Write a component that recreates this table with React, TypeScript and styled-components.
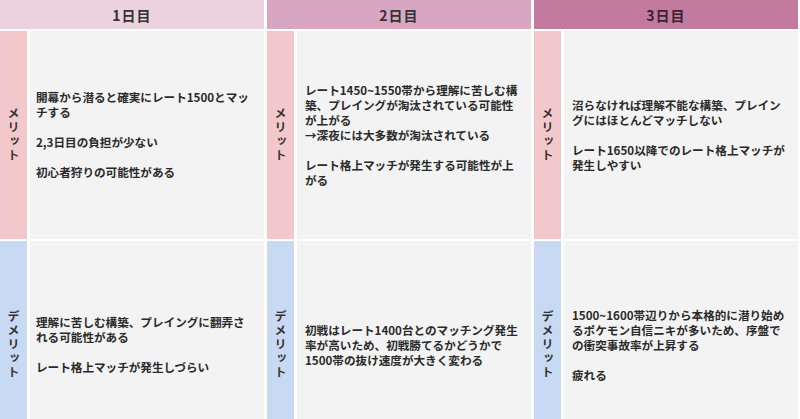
import React from 'react';
import styled, { createGlobalStyle } from 'styled-components';

const GlobalStyle = createGlobalStyle`
  html, body {
    margin: 0;
    padding: 0;
    background: #ffffff;
    overflow: hidden;
  }
  body {
    font-family: "Noto Sans CJK JP", "Noto Sans", sans-serif;
    color: #2a2a2a;
  }
`;

const Table = styled.div`
  display: grid;
  grid-template-columns: 264px 264px 264px;
  column-gap: 3px;
  width: 800px;
`;

const Column = styled.div`
  display: flex;
  flex-direction: column;
  gap: 2px;
`;

const Header = styled.div<{ $bg: string; $fg: string }>`
  height: 29px;
  display: flex;
  align-items: center;
  justify-content: center;
  background: ${(p) => p.$bg};
  color: ${(p) => p.$fg};
  font-size: 14px;
  font-weight: 700;
  letter-spacing: 1px;
`;

const Row = styled.div`
  height: 208px;
  display: flex;
  gap: 3px;
`;

const Label = styled.div<{ $bg: string }>`
  width: 27px;
  flex-shrink: 0;
  background: ${(p) => p.$bg};
  display: flex;
  align-items: center;
  justify-content: center;
  writing-mode: vertical-rl;
  text-orientation: upright;
  font-size: 12px;
  font-weight: 700;
  letter-spacing: 2px;
  color: #333;
`;

const Content = styled.div<{ $pad: number }>`
  flex: 1;
  background: #f3f3f3;
  display: flex;
  flex-direction: column;
  justify-content: center;
  padding-left: ${(p) => p.$pad}px;
  font-size: 11.6px;
  font-weight: 700;
  line-height: 15px;
  white-space: nowrap;
  gap: 15px;
`;

const Para = styled.div``;

const Line = styled.div``;

interface Day {
  title: string;
  bg: string;
  fg: string;
  pad: number;
  merits: string[][];
  demerits: string[][];
}

const days: Day[] = [
  {
    title: '1日目',
    bg: '#ecd2de',
    fg: '#333333',
    pad: 6,
    merits: [
      ['開幕から潜ると確実にレート1500とマッ', 'チする'],
      ['2,3日目の負担が少ない'],
      ['初心者狩りの可能性がある'],
    ],
    demerits: [
      ['理解に苦しむ構築、プレイングに翻弄さ', 'れる可能性がある'],
      ['レート格上マッチが発生しづらい'],
    ],
  },
  {
    title: '2日目',
    bg: '#d8a5c2',
    fg: '#333333',
    pad: 8,
    merits: [
      [
        'レート1450~1550帯から理解に苦しむ構',
        '築、プレイングが淘汰されている可能性',
        'が上がる',
        '→深夜には大多数が淘汰されている',
      ],
      ['レート格上マッチが発生する可能性が上', 'がる'],
    ],
    demerits: [
      [
        '初戦はレート1400台とのマッチング発生',
        '率が高いため、初戦勝てるかどうかで',
        '1500帯の抜け速度が大きく変わる',
      ],
    ],
  },
  {
    title: '3日目',
    bg: '#c27a9f',
    fg: '#3a2230',
    pad: 8,
    merits: [
      ['沼らなければ理解不能な構築、プレイン', 'グにはほとんどマッチしない'],
      ['レート1650以降でのレート格上マッチが', '発生しやすい'],
    ],
    demerits: [
      [
        '1500~1600帯辺りから本格的に潜り始め',
        'るポケモン自信ニキが多いため、序盤で',
        'の衝突事故率が上昇する',
      ],
      ['疲れる'],
    ],
  },
];

function Cell({ paras, pad }: { paras: string[][]; pad: number }) {
  return (
    <Content $pad={pad}>
      {paras.map((lines, i) => (
        <Para key={i}>
          {lines.map((l, j) => (
            <Line key={j}>{l}</Line>
          ))}
        </Para>
      ))}
    </Content>
  );
}

export default function App() {
  return (
    <>
      <GlobalStyle />
      <Table>
        {days.map((d) => (
          <Column key={d.title}>
            <Header $bg={d.bg} $fg={d.fg}>{d.title}</Header>
            <Row>
              <Label $bg="#f3c8cb">メリット</Label>
              <Cell paras={d.merits} pad={d.pad} />
            </Row>
            <Row>
              <Label $bg="#c8d9f4">デメリット</Label>
              <Cell paras={d.demerits} pad={d.pad} />
            </Row>
          </Column>
        ))}
      </Table>
    </>
  );
}
